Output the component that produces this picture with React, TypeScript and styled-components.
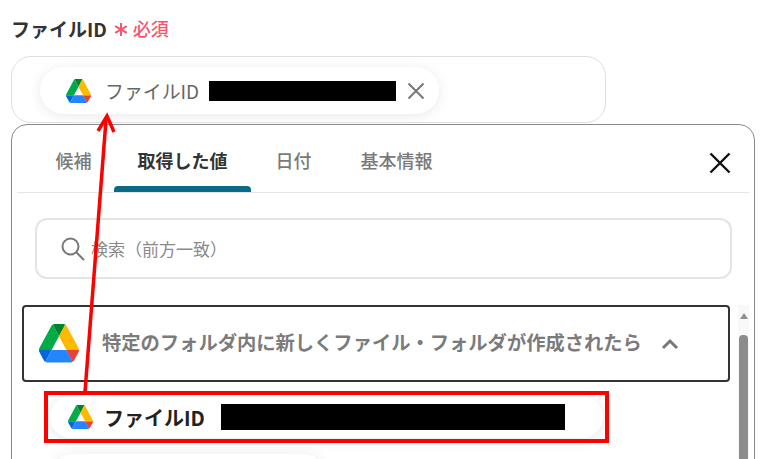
import styled, { createGlobalStyle } from "styled-components";

const GlobalStyle = createGlobalStyle`
  html, body {
    margin: 0;
    padding: 0;
    background: #fff;
    overflow: hidden;
  }
  * {
    box-sizing: border-box;
  }
`;

const Page = styled.div`
  position: relative;
  width: 762px;
  height: 459px;
  overflow: hidden;
  padding: 16px 7px 0 11px;
  font-family: "Noto Sans CJK JP", "Noto Sans", sans-serif;
`;

const LabelRow = styled.div`
  display: flex;
  align-items: center;
  height: 24px;
  margin-bottom: 16px;
`;

const Label = styled.span`
  font-size: 19px;
  font-weight: 700;
  color: #333;
`;

const Asterisk = styled.svg`
  margin: 3px 0 0 7px;
  width: 14px;
  height: 15px;
  flex: none;
`;

const Required = styled.span`
  margin-left: 5px;
  font-size: 18px;
  font-weight: 500;
  color: #f5566f;
`;

const Field = styled.div`
  width: 595px;
  height: 67px;
  border: 1px solid #dcdfe3;
  border-radius: 20px;
  padding: 10px 0 0 28px;
  margin-bottom: 1px;
`;

const Chip = styled.div`
  display: flex;
  align-items: center;
  width: 399px;
  height: 47px;
  border-radius: 24px;
  background: #fff;
  padding-left: 26px;
  box-shadow: 0 2px 14px rgba(0, 0, 0, 0.09);
`;

const ChipName = styled.span<{ $strong?: boolean; $gap: number; $w: number }>`
  margin-left: ${(p) => p.$gap}px;
  width: ${(p) => p.$w}px;
  flex: none;
  font-size: ${(p) => (p.$strong ? 20 : 18.9)}px;
  font-weight: ${(p) => (p.$strong ? 700 : 400)};
  color: ${(p) => (p.$strong ? "#222" : "#666")};
  white-space: nowrap;
`;

const Redaction = styled.div<{ $w: number; $h: number; $ml: number }>`
  width: ${(p) => p.$w}px;
  height: ${(p) => p.$h}px;
  margin-left: ${(p) => p.$ml}px;
  background: #000;
  flex: none;
`;

const ChipClose = styled.svg`
  width: 18px;
  height: 18px;
  margin-left: 11px;
  flex: none;
`;

const Panel = styled.div`
  width: 744px;
  height: 400px;
  border: 1px solid #8a8a8a;
  border-radius: 16px;
  background: #fff;
`;

const TabBar = styled.div`
  display: flex;
  align-items: stretch;
  height: 68px;
  margin: 0 5px;
  border-bottom: 1px solid #e6e6e6;
  padding-left: 16px;
  position: relative;
`;

const Tab = styled.div<{ $active?: boolean; $w: number }>`
  width: ${(p) => p.$w}px;
  display: flex;
  justify-content: center;
  padding-top: 23px;
  font-size: 18px;
  line-height: 24px;
  font-weight: ${(p) => (p.$active ? 700 : 500)};
  color: ${(p) => (p.$active ? "#333" : "#7a7a7a")};
  position: relative;

  ${(p) =>
    p.$active &&
    `
    &::after {
      content: "";
      position: absolute;
      left: 0;
      right: 0;
      bottom: 0;
      height: 6px;
      background: #0b6b85;
      border-radius: 4px 4px 0 0;
    }
  `}
`;

const PanelClose = styled.svg`
  position: absolute;
  right: 18px;
  top: 27px;
  width: 22px;
  height: 22px;
`;

const SearchBox = styled.div`
  display: flex;
  align-items: center;
  width: 697px;
  height: 61px;
  margin: 25px 0 26px 23px;
  border: 2px solid #e4e4e4;
  border-radius: 12px;
  padding-left: 24px;
  color: #8a8a8a;
  font-size: 17px;
`;

const SearchText = styled.span`
  margin-left: 6px;
`;

const ListArea = styled.div`
  display: flex;
  padding-left: 10px;
`;

const List = styled.div`
  width: 708px;
`;

const Group = styled.div`
  display: flex;
  align-items: center;
  height: 77px;
  border: 2px solid #333;
  border-radius: 4px;
  padding-left: 15px;
`;

const GroupTitle = styled.span`
  margin-left: 23px;
  position: relative;
  top: -2px;
  font-size: 19.3px;
  font-weight: 700;
  color: #7b7b7b;
  white-space: nowrap;
`;

const Chevron = styled.svg`
  width: 18px;
  height: 12px;
  margin-left: 19px;
`;

const ItemChip = styled.div`
  display: flex;
  align-items: center;
  width: 553px;
  height: 42px;
  margin: 14px 0 16px 28px;
  border-radius: 21px;
  background: #fff;
  padding-left: 18px;
  box-shadow: 0 2px 14px rgba(0, 0, 0, 0.1);
`;

const NextChip = styled.div`
  width: 273px;
  height: 42px;
  margin-left: 30px;
  border-radius: 21px;
  background: #fff;
  box-shadow: 0 2px 14px rgba(0, 0, 0, 0.1);
`;

const Scrollbar = styled.div`
  width: 11px;
  margin-left: 8px;
  background: #f8f8f8;
  display: flex;
  flex-direction: column;
  align-items: center;
  padding-top: 8px;
  height: 160px;
`;

const ScrollArrow = styled.div`
  width: 0;
  height: 0;
  border-left: 4.5px solid transparent;
  border-right: 4.5px solid transparent;
  border-bottom: 6px solid #8f8f8f;
`;

const ScrollThumb = styled.div`
  width: 9px;
  flex: 1;
  margin-top: 16px;
  background: #8c8c8c;
  border-radius: 4px 4px 0 0;
`;

const Annotation = styled.svg`
  position: absolute;
  left: 0;
  top: 0;
  pointer-events: none;
`;

const Highlight = styled.div`
  position: absolute;
  left: 44px;
  top: 391px;
  width: 565px;
  height: 52px;
  border: 4px solid #f00;
`;

function DriveIcon({ size }: { size: number }) {
  return (
    <svg
      width={size}
      height={size * 0.96}
      viewBox="0 0 87.3 78"
      preserveAspectRatio="none"
      style={{ flex: "none" }}
    >
      <path d="m6.6 66.85 3.85 6.65c.8 1.4 1.95 2.5 3.3 3.3l13.75-23.8h-27.5c0 1.55.4 3.1 1.2 4.5z" fill="#0066da" />
      <path d="m43.65 25-13.75-23.8c-1.35.8-2.5 1.9-3.3 3.3l-25.4 44a9.06 9.06 0 0 0 -1.2 4.5h27.5z" fill="#00ac47" />
      <path d="m73.55 76.8c1.35-.8 2.5-1.9 3.3-3.3l1.6-2.75 7.65-13.25c.8-1.4 1.2-2.95 1.2-4.5h-27.502l5.852 11.5z" fill="#ea4335" />
      <path d="m43.65 25 13.75-23.8c-1.35-.8-2.9-1.2-4.5-1.2h-18.5c-1.6 0-3.15.45-4.5 1.2z" fill="#00832d" />
      <path d="m59.8 53h-32.3l-13.75 23.8c1.35.8 2.9 1.2 4.5 1.2h50.8c1.6 0 3.15-.45 4.5-1.2z" fill="#2684fc" />
      <path d="m73.4 26.5-12.7-22c-.8-1.4-1.95-2.5-3.3-3.3l-13.75 23.8 16.15 28h27.45c0-1.55-.4-3.1-1.2-4.5z" fill="#ffba00" />
    </svg>
  );
}

function SearchIcon() {
  return (
    <svg width="24" height="24" viewBox="0 0 24 24" fill="none" stroke="#777" strokeWidth="2" strokeLinecap="round" style={{ flex: "none" }}>
      <circle cx="9.5" cy="9.5" r="8" />
      <path d="M15.5 15.5l7 7" />
    </svg>
  );
}

export default function App() {
  return (
    <>
      <GlobalStyle />
      <Page>
        <LabelRow>
          <Label>ファイルID</Label>
          <Asterisk viewBox="0 0 14 15" fill="none" stroke="#f5566f" strokeWidth="2">
            <path d="M7 1v13M1.2 4.2l11.6 6.6M12.8 4.2L1.2 10.8" />
          </Asterisk>
          <Required>必須</Required>
        </LabelRow>
        <Field>
          <Chip>
            <DriveIcon size={25} />
            <ChipName $gap={14} $w={95}>ファイルID</ChipName>
            <Redaction $w={187} $h={20} $ml={9} />
            <ChipClose viewBox="0 0 18 18" fill="none" stroke="#777" strokeWidth="2">
              <path d="M1.5 1.5l15 15M16.5 1.5l-15 15" />
            </ChipClose>
          </Chip>
        </Field>
        <Panel>
          <TabBar>
            <Tab $w={81}>候補</Tab>
            <Tab $w={137} $active>取得した値</Tab>
            <Tab $w={85}>日付</Tab>
            <Tab $w={121}>基本情報</Tab>
            <PanelClose viewBox="0 0 22 22" fill="none" stroke="#111" strokeWidth="2.4">
              <path d="M1.5 1.5l19 19M20.5 1.5l-19 19" />
            </PanelClose>
          </TabBar>
          <SearchBox>
            <SearchIcon />
            <SearchText>検索（前方一致）</SearchText>
          </SearchBox>
          <ListArea>
            <List>
              <Group>
                <DriveIcon size={40} />
                <GroupTitle>特定のフォルダ内に新しくファイル・フォルダが作成されたら</GroupTitle>
                <Chevron viewBox="0 0 18 12" fill="none" stroke="#777" strokeWidth="3">
                  <path d="M2 10l7-7 7 7" />
                </Chevron>
              </Group>
              <ItemChip>
                <DriveIcon size={25} />
                <ChipName $strong $gap={11} $w={102}>ファイルID</ChipName>
                <Redaction $w={344} $h={26} $ml={15} />
              </ItemChip>
              <NextChip />
            </List>
            <Scrollbar>
              <ScrollArrow />
              <ScrollThumb />
            </Scrollbar>
          </ListArea>
        </Panel>
        <Highlight />
        <Annotation width="762" height="459" viewBox="0 0 762 459">
          <path d="M85 392L106 120" stroke="#f00" strokeWidth="3.5" fill="none" />
          <path d="M98 131L107 116L114 132" stroke="#f00" strokeWidth="3.5" fill="none" />
        </Annotation>
      </Page>
    </>
  );
}
